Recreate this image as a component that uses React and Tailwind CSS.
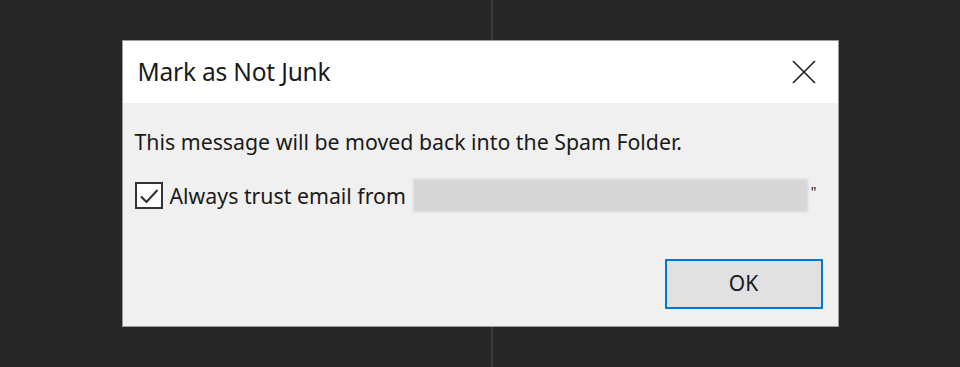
import React from 'react'

const font = { fontFamily: '"Segoe UI", "Noto Sans", "Open Sans", sans-serif' }

const CloseIcon = () => (
  <svg width="24" height="24" viewBox="0 0 24 24" fill="none" stroke="#1f1f1f" strokeWidth="1.6">
    <path d="M1 1 L23 23 M23 1 L1 23" />
  </svg>
)

const CheckBox = () => (
  <span className="w-[28px] h-[27px] border-2 border-[#333333] bg-white flex items-center justify-center shrink-0">
    <svg width="20" height="16" viewBox="0 0 20 16" fill="none" stroke="#333333" strokeWidth="2.2">
      <path d="M2 8.5 L7.5 14 L18.5 2" />
    </svg>
  </span>
)

export default function App() {
  return (
    <div className="w-[960px] h-[367px] bg-[#262626] flex items-start justify-center relative overflow-hidden" style={font}>
      {/* divider behind the dialog */}
      <div className="absolute left-[491px] top-0 w-[2px] h-full bg-[#3a3a3a]" />

      <div className="relative mt-[40px] w-[717px] h-[287px] bg-[#f0f0f0] border border-[#9a9a9a] flex flex-col">
        {/* Title bar */}
        <div className="h-[62px] bg-white flex items-center justify-between pl-[15px] pr-[22px]">
          <span className="text-[24.5px] text-[#1a1a1a] tracking-[-0.2px]">Mark as Not Junk</span>
          <CloseIcon />
        </div>

        {/* Body */}
        <div className="flex-1 flex flex-col pl-[12px] pr-[14px]">
          <p className="mt-[25px] text-[21.3px] text-[#1a1a1a] leading-[28px]">
            This message will be moved back into the Spam Folder.
          </p>
          <div className="mt-[23px] flex items-center">
            <CheckBox />
            <span className="ml-[7px] text-[21.3px] text-[#1a1a1a]">Always trust email from</span>
            <span className="ml-[7px] w-[395px] h-[33px] bg-[#d6d6d6] blur-[1px]" />
            <span className="ml-[3px] self-start mt-[2px] text-[14px] text-[#1a1a1a]">"</span>
          </div>
          <div className="mt-auto mb-[17px] flex justify-end">
            <button className="w-[158px] h-[50px] bg-[#e1e1e1] border-2 border-[#0078d7] text-[21px] text-[#1a1a1a] mr-[1px]">
              OK
            </button>
          </div>
        </div>
      </div>
    </div>
  )
}
